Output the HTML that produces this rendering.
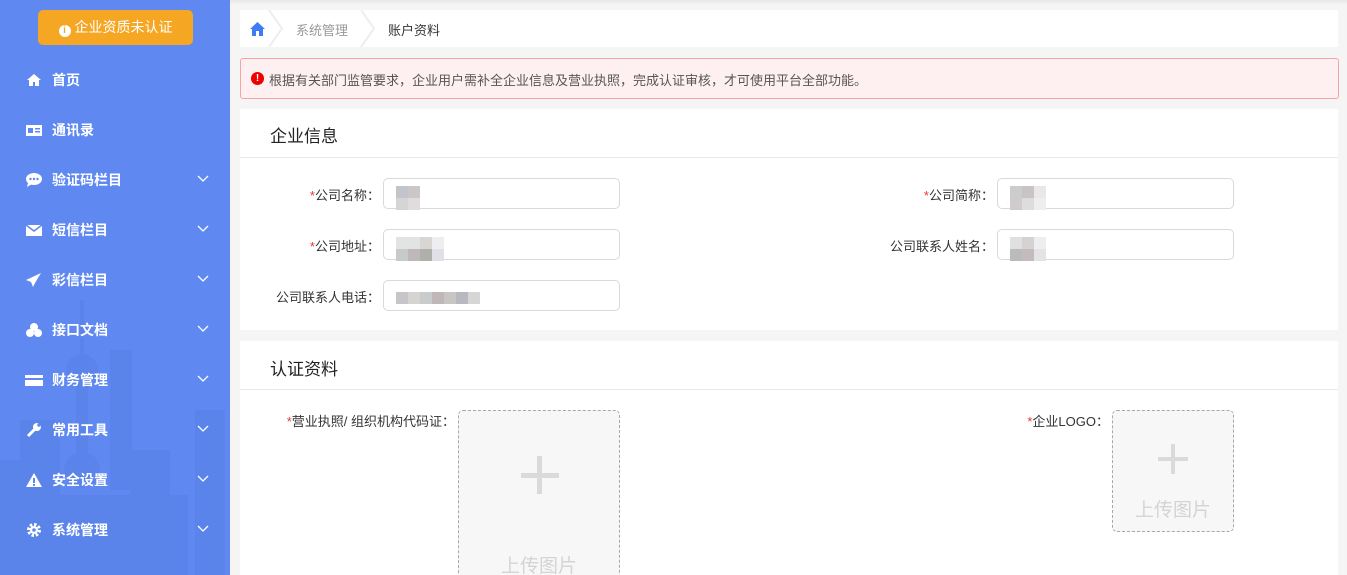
<!DOCTYPE html>
<html><head><meta charset="utf-8"><style>
*{margin:0;padding:0;box-sizing:border-box}
html,body{width:1347px;height:575px;overflow:hidden}
body{background:#f5f5f5;font-family:"Liberation Sans","Noto Sans CJK SC",sans-serif;font-size:14px;color:#333;position:relative}
.side{position:absolute;left:0;top:0;width:230px;height:575px;background:#5f89f1;overflow:hidden}
.btn{position:absolute;left:38px;top:10px;width:155px;height:35px;background:#f5a623;border-radius:5px;color:#fff;font-size:14px;line-height:35px;text-align:center}
.btn i{display:inline-block;width:12px;height:12px;border-radius:50%;background:#fff;color:#f5a623;font-size:10px;line-height:12px;font-style:normal;font-weight:bold;vertical-align:-1px;margin-right:4px}
.item{position:absolute;left:0;width:230px;height:30px;color:#fff;font-weight:bold;font-size:14px;line-height:30px}
.item .ic{position:absolute;left:25px;top:7px;width:18px;height:16px}
.item .t{position:absolute;left:52px}
.item .ch{position:absolute;left:197px;top:10px;width:12px;height:8px}
.box{position:absolute;background:#fff}
.req{color:#e33}
.lbl{position:absolute;font-size:13px;color:#333;text-align:right}
.inp{position:absolute;width:237px;height:31px;border:1px solid #d9d9d9;border-radius:5px;background:#fff}
.pix{position:absolute;top:7px;left:12px;display:flex;flex-wrap:wrap}
.up{position:absolute;border:1px dashed #a8a8a8;border-radius:5px;background:#f7f7f7}
.up .tx{position:absolute;width:100%;text-align:center;color:#d4d4d4;font-size:19px}
</style></head><body>
<div class="side">
<svg style="position:absolute;left:0;top:300px" width="230" height="275" viewBox="0 0 230 275">
<g fill="#5b84ea">
<rect x="80" y="0" width="4" height="60"/>
<circle cx="82" cy="70" r="16"/>
<rect x="76" y="80" width="12" height="90"/>
<circle cx="82" cy="170" r="18"/>
<rect x="110" y="50" width="22" height="140"/>
<rect x="195" y="110" width="30" height="165"/>
<rect x="20" y="120" width="40" height="155"/>
<rect x="0" y="160" width="30" height="115"/>
<rect x="48" y="195" width="140" height="80"/>
<rect x="130" y="150" width="40" height="60"/>
</g></svg>
<div class="btn"><i>i</i>企业资质未认证</div>
<div class="item" style="top:65px"><svg class="ic" viewBox="0 0 18 16"><path d="M9 2 L2 8 H4 V14 H8 V10 H10 V14 H14 V8 H16 Z" fill="#fff"/></svg><span class="t">首页</span></div>
<div class="item" style="top:115px"><svg class="ic" viewBox="0 0 18 16"><rect x="1" y="3" width="16" height="11" fill="#fff"/><rect x="3" y="6" width="5" height="5" fill="#5f89f1"/><rect x="10" y="6" width="5" height="1.5" fill="#5f89f1"/><rect x="10" y="9" width="5" height="1.5" fill="#5f89f1"/></svg><span class="t">通讯录</span></div>
<div class="item" style="top:165px"><svg class="ic" viewBox="0 0 18 16"><ellipse cx="9" cy="7" rx="8" ry="6" fill="#fff"/><path d="M3 11 L2 15 L7 12Z" fill="#fff"/><circle cx="5.5" cy="7" r="1.2" fill="#5f89f1"/><circle cx="9" cy="7" r="1.2" fill="#5f89f1"/><circle cx="12.5" cy="7" r="1.2" fill="#5f89f1"/></svg><span class="t">验证码栏目</span><svg class="ch" viewBox="0 0 12 8"><path d="M1 1 L6 6 L11 1" stroke="#fff" fill="none" stroke-width="1.3"/></svg></div>
<div class="item" style="top:215px"><svg class="ic" viewBox="0 0 18 16"><rect x="1" y="3" width="16" height="11" fill="#fff"/><path d="M1 3 L9 9 L17 3" stroke="#5f89f1" fill="none" stroke-width="1.5"/></svg><span class="t">短信栏目</span><svg class="ch" viewBox="0 0 12 8"><path d="M1 1 L6 6 L11 1" stroke="#fff" fill="none" stroke-width="1.3"/></svg></div>
<div class="item" style="top:265px"><svg class="ic" viewBox="0 0 18 16"><path d="M16 1 L1 8 L6 10 L8 15 L10 11 Z" fill="#fff"/></svg><span class="t">彩信栏目</span><svg class="ch" viewBox="0 0 12 8"><path d="M1 1 L6 6 L11 1" stroke="#fff" fill="none" stroke-width="1.3"/></svg></div>
<div class="item" style="top:315px"><svg class="ic" viewBox="0 0 18 16"><circle cx="9" cy="5" r="4" fill="#fff"/><circle cx="5" cy="11" r="4" fill="#fff"/><circle cx="13" cy="11" r="4" fill="#fff"/></svg><span class="t">接口文档</span><svg class="ch" viewBox="0 0 12 8"><path d="M1 1 L6 6 L11 1" stroke="#fff" fill="none" stroke-width="1.3"/></svg></div>
<div class="item" style="top:365px"><svg class="ic" viewBox="0 0 18 16"><rect x="0" y="3" width="18" height="11" fill="#fff"/><rect x="0" y="6" width="18" height="2" fill="#5f89f1"/></svg><span class="t">财务管理</span><svg class="ch" viewBox="0 0 12 8"><path d="M1 1 L6 6 L11 1" stroke="#fff" fill="none" stroke-width="1.3"/></svg></div>
<div class="item" style="top:415px"><svg class="ic" viewBox="0 0 18 16"><path d="M3 14 L10 7" stroke="#fff" stroke-width="3"/><circle cx="12" cy="5" r="4" fill="#fff"/><circle cx="14" cy="3" r="1.8" fill="#5f89f1"/></svg><span class="t">常用工具</span><svg class="ch" viewBox="0 0 12 8"><path d="M1 1 L6 6 L11 1" stroke="#fff" fill="none" stroke-width="1.3"/></svg></div>
<div class="item" style="top:465px"><svg class="ic" viewBox="0 0 18 16"><path d="M9 1 L17 15 H1 Z" fill="#fff"/><rect x="8" y="6" width="2" height="5" fill="#5f89f1"/><rect x="8" y="12" width="2" height="2" fill="#5f89f1"/></svg><span class="t">安全设置</span><svg class="ch" viewBox="0 0 12 8"><path d="M1 1 L6 6 L11 1" stroke="#fff" fill="none" stroke-width="1.3"/></svg></div>
<div class="item" style="top:515px"><svg class="ic" viewBox="0 0 18 16"><circle cx="9" cy="8" r="5.5" fill="none" stroke="#fff" stroke-width="3" stroke-dasharray="2.5 1.8"/><circle cx="9" cy="8" r="4" fill="#fff"/><circle cx="9" cy="8" r="1.8" fill="#5f89f1"/></svg><span class="t">系统管理</span><svg class="ch" viewBox="0 0 12 8"><path d="M1 1 L6 6 L11 1" stroke="#fff" fill="none" stroke-width="1.3"/></svg></div>
</div>
<div style="position:absolute;left:230px;top:0;width:1117px;height:5px;background:linear-gradient(#e8e8e8,#f5f5f5)"></div>
<div class="box" style="left:240px;top:10px;width:1098px;height:37px">
<svg style="position:absolute;left:9px;top:11px" width="17" height="16" viewBox="0 0 17 16"><path d="M8.5 1 L1 8 H3 V15 H7 V10 H10 V15 H14 V8 H16 Z" fill="#3c7cf5"/></svg>
<svg style="position:absolute;left:28px;top:0" width="16" height="37"><path d="M1 0 L14 18.5 L1 37" fill="none" stroke="#eee" stroke-width="2"/></svg>
<span style="position:absolute;left:56px;top:10px;font-size:13px;color:#999">系统管理</span>
<svg style="position:absolute;left:120px;top:0" width="16" height="37"><path d="M1 0 L14 18.5 L1 37" fill="none" stroke="#eee" stroke-width="2"/></svg>
<span style="position:absolute;left:148px;top:10px;font-size:13px;color:#333">账户资料</span>
</div>
<div style="position:absolute;left:240px;top:58px;width:1099px;height:41px;background:#fef0f0;border:1px solid #f5a3a3;border-radius:3px">
<span style="position:absolute;left:10px;top:13px;width:13px;height:13px;border-radius:50%;background:#e00;color:#fff;font-size:10px;font-weight:bold;line-height:13px;text-align:center">!</span>
<span style="position:absolute;left:28px;top:11px;font-size:13px;color:#555">根据有关部门监管要求，企业用户需补全企业信息及营业执照，完成认证审核，才可使用平台全部功能。</span>
</div>
<div class="box" style="left:240px;top:109px;width:1098px;height:221px">
<div style="position:absolute;left:30px;top:13px;font-size:17px;color:#222">企业信息</div>
<div style="position:absolute;left:0;top:48px;width:100%;height:1px;background:#e8e8e8"></div>
</div>
<div class="lbl" style="left:250px;top:185px;width:130px"><span class="req">*</span>公司名称：</div>
<div class="lbl" style="left:860px;top:185px;width:134px"><span class="req">*</span>公司简称：</div>
<div class="lbl" style="left:250px;top:236px;width:130px"><span class="req">*</span>公司地址：</div>
<div class="lbl" style="left:860px;top:236px;width:134px">公司联系人姓名：</div>
<div class="lbl" style="left:250px;top:287px;width:130px">公司联系人电话：</div>
<div class="inp" style="left:383px;top:178px"><div class="pix" style="width:24px"><i style="width:12px;height:12px;background:#c4c4cc"></i><i style="width:12px;height:12px;background:#cdc6c8"></i><i style="width:12px;height:12px;background:#d5d5d5"></i><i style="width:12px;height:12px;background:#e0dcde"></i></div></div>
<div class="inp" style="left:997px;top:178px"><div class="pix" style="width:36px"><i style="width:12px;height:12px;background:#ccc"></i><i style="width:12px;height:12px;background:#c8c4c6"></i><i style="width:12px;height:12px;background:#e8e8ec"></i><i style="width:12px;height:12px;background:#d0ccce"></i><i style="width:12px;height:12px;background:#ddd"></i><i style="width:12px;height:12px;background:#eee"></i></div></div>
<div class="inp" style="left:383px;top:229px"><div class="pix" style="width:48px"><i style="width:12px;height:12px;background:#e2e4e4"></i><i style="width:12px;height:12px;background:#e2e4e4"></i><i style="width:12px;height:12px;background:#d8d6d2"></i><i style="width:12px;height:12px;background:#eceef0"></i><i style="width:12px;height:12px;background:#c8cac8"></i><i style="width:12px;height:12px;background:#bfb8ba"></i><i style="width:12px;height:12px;background:#b0b0aa"></i><i style="width:12px;height:12px;background:#e0e0e6"></i></div></div>
<div class="inp" style="left:997px;top:229px"><div class="pix" style="width:36px"><i style="width:12px;height:12px;background:#e0e0e0"></i><i style="width:12px;height:12px;background:#d6d2d2"></i><i style="width:12px;height:12px;background:#eee"></i><i style="width:12px;height:12px;background:#bbb"></i><i style="width:12px;height:12px;background:#c4bcbc"></i><i style="width:12px;height:12px;background:#e4e4e8"></i></div></div>
<div class="inp" style="left:383px;top:280px"><div class="pix" style="top:11px;width:96px"><i style="width:12px;height:12px;background:#c8c4ca"></i><i style="width:12px;height:12px;background:#d6d4d0"></i><i style="width:12px;height:12px;background:#c8cccc"></i><i style="width:12px;height:12px;background:#c0b8b8"></i><i style="width:12px;height:12px;background:#c8c6c4"></i><i style="width:12px;height:12px;background:#b8b8c0"></i><i style="width:12px;height:12px;background:#d6d6d6"></i></div></div>
<div class="box" style="left:240px;top:341px;width:1098px;height:234px">
<div style="position:absolute;left:30px;top:14px;font-size:17px;color:#222">认证资料</div>
<div style="position:absolute;left:0;top:48px;width:100%;height:1px;background:#e8e8e8"></div>
</div>
<div class="lbl" style="left:250px;top:411px;width:205px"><span class="req">*</span>营业执照/ 组织机构代码证：</div>
<div class="lbl" style="left:980px;top:411px;width:129px"><span class="req">*</span>企业LOGO：</div>
<div class="up" style="left:458px;top:410px;width:162px;height:185px">
<div style="position:absolute;left:62px;top:62px;width:38px;height:5px;background:#dadada"></div>
<div style="position:absolute;left:78px;top:45px;width:5px;height:38px;background:#dadada"></div>
<div class="tx" style="top:140px">上传图片</div>
</div>
<div class="up" style="left:1112px;top:410px;width:122px;height:122px">
<div style="position:absolute;left:45px;top:46px;width:30px;height:4px;background:#dadada"></div>
<div style="position:absolute;left:58px;top:33px;width:4px;height:30px;background:#dadada"></div>
<div class="tx" style="top:84px">上传图片</div>
</div>
</body></html>
